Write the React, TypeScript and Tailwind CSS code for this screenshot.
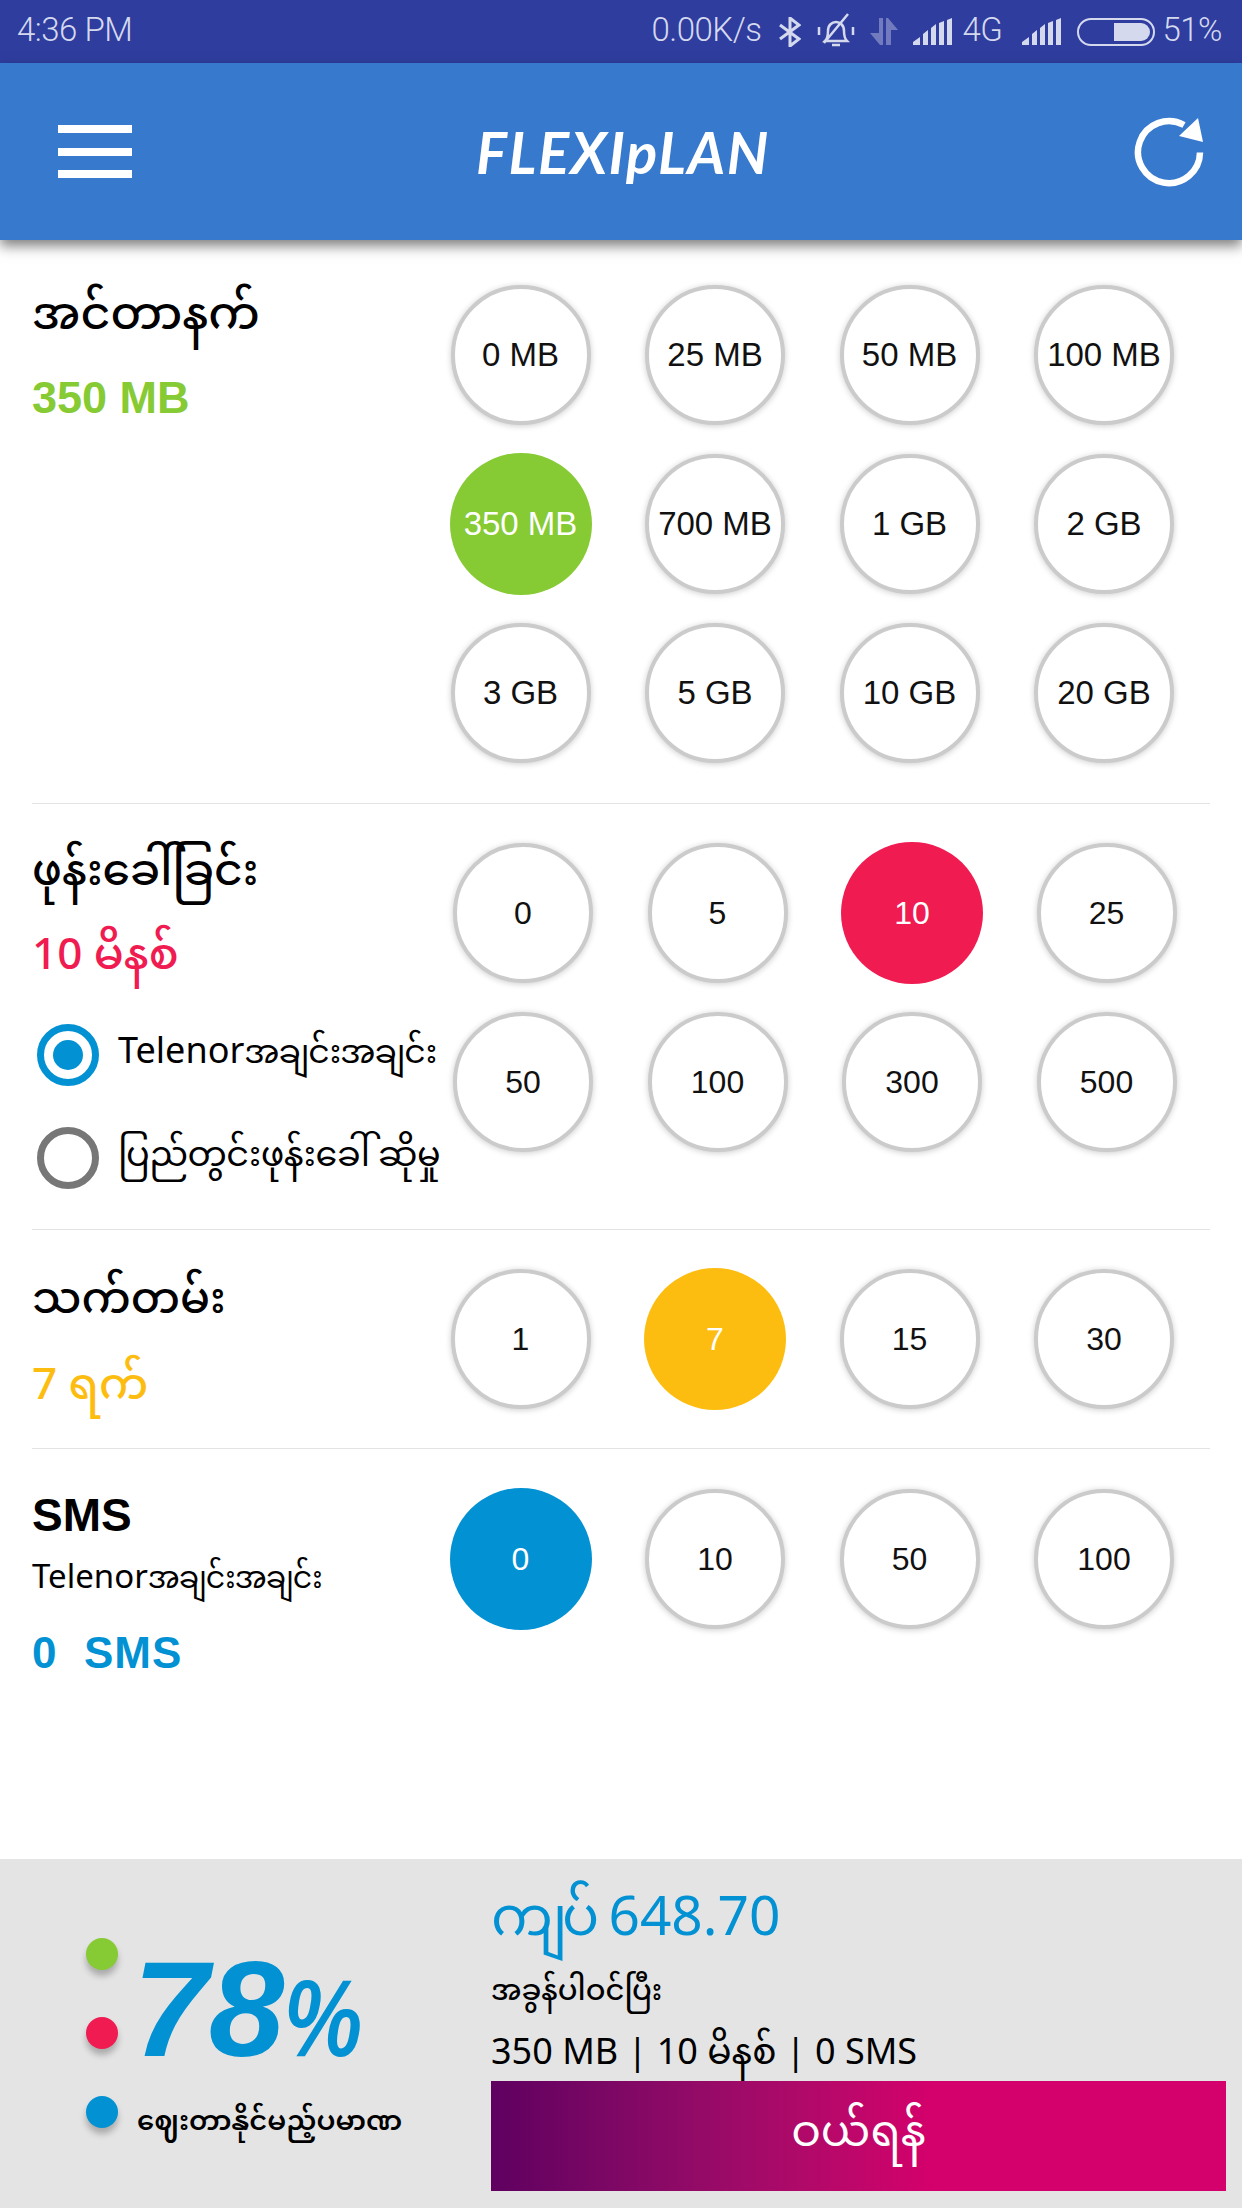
import React from 'react';

const MY = { fontFamily: '"Noto Sans Myanmar", "Padauk", "Myanmar Text", "Noto Sans", "DejaVu Sans", sans-serif' };

const Signal = () => (
    <svg width="40" height="27" viewBox="0 0 40 27" fill="#d5d9ee">
        <path d="M0 27v-3l7-5v8zM10 27V16l5-4v15zM18 27V10l5-4v21zM26 27V5l5-2v24zM34 27V2l5-2v27z" />
    </svg>
);

const StatusBar = () => (
    <div className="h-[63px] bg-[#2f3d9f] flex items-center text-[#d5d9ee] text-[33px] font-['Roboto',sans-serif] font-light pl-[17px] pr-[20px] pb-[3px] shrink-0">
        <span className="tracking-[-0.5px]">4:36 PM</span>
        <div className="ml-auto flex items-center">
            <span className="tracking-[-0.5px]">0.00K/s</span>
            <svg className="ml-[18px] mt-[3px]" width="22" height="30" viewBox="0 0 22 30" fill="none" stroke="#d5d9ee" strokeWidth="3">
                <path d="M1 8l19 14-9 7V1l9 7L1 22" />
            </svg>
            <svg className="ml-[16px]" width="38" height="34" viewBox="0 0 38 34" fill="none" stroke="#d5d9ee" strokeWidth="2.5">
                <path d="M8 28c3-3 3-6 3-10 0-6 4-9 8-9s8 3 8 9c0 4 0 7 3 10zM15 32h8M7 30L31 1M2 14v8M36 14v8" />
            </svg>
            <svg className="ml-[14px] mt-[3px] opacity-40" width="29" height="27" viewBox="0 0 29 27" fill="#d5d9ee">
                <path d="M10 0h4v27h-3L1 15h9zM17 0h2l10 12h-7v15h-5z" />
            </svg>
            <div className="ml-[15px] mt-[3px]"><Signal /></div>
            <span className="ml-[9px] w-[40px] tracking-[-0.5px]">4G</span>
            <div className="ml-[20px] mt-[3px]"><Signal /></div>
            <div className="ml-[15px] mt-[3px] w-[78px] h-[28px] rounded-full border-2 border-[#d5d9ee] flex justify-end p-[3px]">
                <div className="w-[36px] bg-[#d5d9ee] rounded-r-full" />
            </div>
            <span className="ml-[7px] tracking-[-0.5px]">51%</span>
        </div>
    </div>
);

const Header = () => (
    <div className="h-[177px] bg-[#3779cd] flex items-center justify-between pl-[58px] pr-[34px] shrink-0 shadow-[0_6px_12px_rgba(0,0,0,0.5)] relative z-10">
        <div className="flex flex-col gap-[14.5px] w-[74px]">
            <div className="h-[8px] bg-white" />
            <div className="h-[8px] bg-white" />
            <div className="h-[8px] bg-white" />
        </div>
        <span className="text-white italic font-bold text-[58px] leading-none font-['Lato',sans-serif] tracking-[1.5px] ml-[-20px]">FLEXIpLAN</span>
        <svg width="74" height="74" viewBox="0 0 74 74" fill="none">
            <path d="M66 37.5A31 31 0 1 1 50 10" stroke="white" strokeWidth="6.5" />
            <path d="M64 3L69 27L45 21z" fill="white" />
        </svg>
    </div>
);

const Bubble = ({ label, color }: { label: string; color?: string }) => (
    <div
        className={`rounded-full flex items-center justify-center font-['Liberation_Sans',sans-serif] whitespace-nowrap ${
            label.includes('B') ? 'text-[33px]' : 'text-[32px]'
        } ${color ? 'w-[142px] h-[142px] text-white' : 'w-[140px] h-[140px] m-[1px] bg-white text-[#111] border-[4px] border-[#cbcbcb] shadow-[0_1px_6px_rgba(0,0,0,0.2)]'}`}
        style={color ? { backgroundColor: color } : undefined}
    >
        {label}
    </div>
);

const Grid = ({ items, selected, color }: { items: string[]; selected: string; color: string }) => (
    <div className="grid grid-cols-[repeat(4,142px)] gap-x-[52.5px] gap-y-[27px] ml-auto mr-[35px] content-start">
        {items.map((i) => (
            <Bubble key={i} label={i} color={i === selected ? color : undefined} />
        ))}
    </div>
);

const Radio = ({ on, children }: { on?: boolean; children: React.ReactNode }) => (
    <div className="flex items-center gap-[19px]">
        <div className={`w-[62px] h-[62px] rounded-full border-[7px] flex items-center justify-center ml-[5px] ${on ? 'border-[#0291d3]' : 'border-[#777]'}`}>
            {on && <div className="w-[30px] h-[30px] rounded-full bg-[#0291d3]" />}
        </div>
        <span className="text-[36px] text-black whitespace-nowrap" style={MY}>{children}</span>
    </div>
);

const BottomDot = ({ color }: { color: string }) => (
    <div className="w-[32px] h-[32px] rounded-full shadow-[0_6px_6px_rgba(0,0,0,0.25)]" style={{ backgroundColor: color }} />
);

export default function App() {
    return (
        <div className="w-[1242px] h-[2208px] bg-white flex flex-col overflow-hidden">
            <StatusBar />
            <Header />

            <div className="flex-1 flex flex-col px-[32px]">
                <section className="flex pt-[44px] pb-[39px] border-b border-[#e3e3e3] w-[1178px]">
                    <div>
                        <div className="text-[46px] text-black font-medium leading-[70px]" style={MY}>အင်တာနက်</div>
                        <div className="text-[45px] font-bold text-[#86ca34] font-['Liberation_Sans',sans-serif] mt-[10px]">350 MB</div>
                    </div>
                    <Grid color="#86ca34" selected="350 MB" items={['0 MB', '25 MB', '50 MB', '100 MB', '350 MB', '700 MB', '1 GB', '2 GB', '3 GB', '5 GB', '10 GB', '20 GB']} />
                </section>

                <section className="flex pt-[38px] pb-[40px] border-b border-[#e3e3e3] w-[1178px]">
                    <div className="w-[420px] shrink-0 mt-[-2px]">
                        <div className="text-[44px] text-black font-medium leading-[70px]" style={MY}>ဖုန်းခေါ်ခြင်း</div>
                        <div className="text-[44px] text-[#f01b50] font-medium leading-[70px] mt-[14px]" style={MY}>10 မိနစ်</div>
                        <div className="flex flex-col gap-[41px] mt-[30px]">
                            <Radio on>Telenor<span className="text-[33px] tracking-[-1px]">အချင်းအချင်း</span></Radio>
                            <Radio><span className="text-[35px] tracking-[-0.5px]">ပြည်တွင်းဖုန်းခေါ် ဆိုမှု</span></Radio>
                        </div>
                    </div>
                    <Grid color="#f01b50" selected="10" items={['0', '5', '10', '25', '50', '100', '300', '500']} />
                </section>

                <section className="flex pt-[38px] pb-[38px] border-b border-[#e3e3e3] w-[1178px]">
                    <div className="h-[142px]">
                        <div className="text-[44px] text-black font-medium leading-[70px]" style={MY}>သက်တမ်း</div>
                        <div className="text-[44px] text-[#fdbd10] font-medium leading-[70px] mt-[16px]" style={MY}>7 ရက်</div>
                    </div>
                    <Grid color="#fdbd10" selected="7" items={['1', '7', '15', '30']} />
                </section>

                <section className="flex pt-[39px] w-[1178px]">
                    <div className="mt-[-1px]">
                        <div className="text-[46px] font-bold text-black font-['Liberation_Sans',sans-serif] leading-[64px] mt-[-4px]">SMS</div>
                        <div className="text-[33px] text-black leading-[50px] mt-[8px] whitespace-nowrap" style={MY}>Telenor<span className="text-[30px] tracking-[-1px]">အချင်းအချင်း</span></div>
                        <div className="text-[44px] font-bold text-[#0291d3] font-['Liberation_Sans',sans-serif] tracking-[1px] mt-[14px]">0&nbsp; SMS</div>
                    </div>
                    <Grid color="#0291d3" selected="0" items={['0', '10', '50', '100']} />
                </section>
            </div>

            <div className="h-[349px] bg-[#e4e4e4] flex shrink-0 pl-[86px]">
                <div className="w-[405px] flex pt-[79px]">
                    <div className="flex flex-col gap-[47px] w-[47px]">
                        <BottomDot color="#86ca34" />
                        <BottomDot color="#f01b50" />
                        <BottomDot color="#0291d3" />
                    </div>
                    <div>
                        <div className="text-[#0291d3] italic font-bold text-[136px] leading-none font-['Liberation_Sans',sans-serif] mt-[3px] whitespace-nowrap">
                            78<span className="inline-block text-[110px] origin-left scale-x-[0.8]">%</span>
                        </div>
                        <div className="text-[27.5px] text-black font-semibold whitespace-nowrap mt-[27px] ml-[4px]" style={MY}>ဈေးတာနိုင်မည့်ပမာဏ</div>
                    </div>
                </div>
                <div className="flex flex-col w-[735px]">
                    <div className="text-[55px] text-[#0291d3] leading-[80px] mt-[23px]" style={MY}><span className="tracking-[-5px]">ကျပ်</span> 648.70</div>
                    <div className="text-[29px] text-black font-medium leading-[48px] mt-[8px]" style={MY}>အခွန်ပါဝင်ပြီး</div>
                    <div className="text-[36px] text-black leading-[50px] mt-[13px] whitespace-nowrap" style={MY}>350 MB | 10 မိနစ် | 0 SMS</div>
                    <div className="h-[110px] bg-gradient-to-r from-[#5f0060] via-[#d4006b] via-60% to-[#d4006b] flex items-center justify-center text-white text-[44px]" style={MY}>ဝယ်ရန်</div>
                </div>
            </div>
        </div>
    );
}
